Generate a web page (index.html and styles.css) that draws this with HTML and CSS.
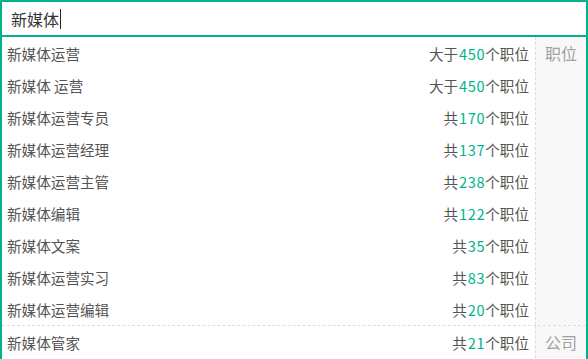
FILE: index.html
```html
<html>
<head>
<meta charset="utf-8">
<link rel="stylesheet" href="styles.css">
</head>
<body>
<div class="search">
	<div class="searchBox">
		<span class="query">新媒体</span><span class="caret"></span>
	</div>
	<div class="suggest">
		<div class="group">
			<ul>
				<li><span class="name">新媒体运营</span><span class="count">大于<em>450</em>个职位</span></li>
				<li><span class="name">新媒体 运营</span><span class="count">大于<em>450</em>个职位</span></li>
				<li><span class="name">新媒体运营专员</span><span class="count">共<em>170</em>个职位</span></li>
				<li><span class="name">新媒体运营经理</span><span class="count">共<em>137</em>个职位</span></li>
				<li><span class="name">新媒体运营主管</span><span class="count">共<em>238</em>个职位</span></li>
				<li><span class="name">新媒体编辑</span><span class="count">共<em>122</em>个职位</span></li>
				<li><span class="name">新媒体文案</span><span class="count">共<em>35</em>个职位</span></li>
				<li><span class="name">新媒体运营实习</span><span class="count">共<em>83</em>个职位</span></li>
				<li><span class="name">新媒体运营编辑</span><span class="count">共<em>20</em>个职位</span></li>
			</ul>
			<div class="groupLabel">职位</div>
		</div>
		<div class="group">
			<ul>
				<li><span class="name">新媒体管家</span><span class="count">共<em>21</em>个职位</span></li>
			</ul>
			<div class="groupLabel">公司</div>
		</div>
	</div>
</div>
</body>
</html>
```

FILE: styles.css
```css
body {
    margin: 0;
    font-family: "Noto Sans CJK SC", "Noto Sans", sans-serif;
    background: #ffffff;
}
ul {
    list-style: none;
    margin: 0;
    padding: 0;
}
em {
    font-style: normal;
    color: #00b38a;
    letter-spacing: 0.6px;
    padding-left: 1px;
}
.search {
    width: 588px;
}
.searchBox {
    height: 33px;
    border: 2px solid #00b38a;
    display: flex;
    align-items: center;
    padding-left: 9px;
    font-size: 16px;
    color: #333333;
}
.caret {
    display: inline-block;
    width: 1px;
    height: 20px;
    background: #222222;
    margin-left: 1px;
}
.suggest {
    border-left: 2px solid #00b38a;
    border-right: 2px solid #00b38a;
    height: 322px;
    overflow: hidden;
}
.group {
    display: flex;
}
.group + .group {
    border-top: 1px dashed #dddddd;
}
.group ul {
    flex: 1;
}
.group li {
    height: 32px;
    display: flex;
    align-items: center;
    justify-content: space-between;
    padding: 0 6px 0 5px;
    font-size: 14.6px;
    color: #555555;
}
.groupLabel {
    width: 50px;
    background: #f8f8f8;
    border-left: 1px dashed #dddddd;
    color: #a0a0a0;
    font-size: 16px;
    text-align: center;
    line-height: 32px;
}
```
